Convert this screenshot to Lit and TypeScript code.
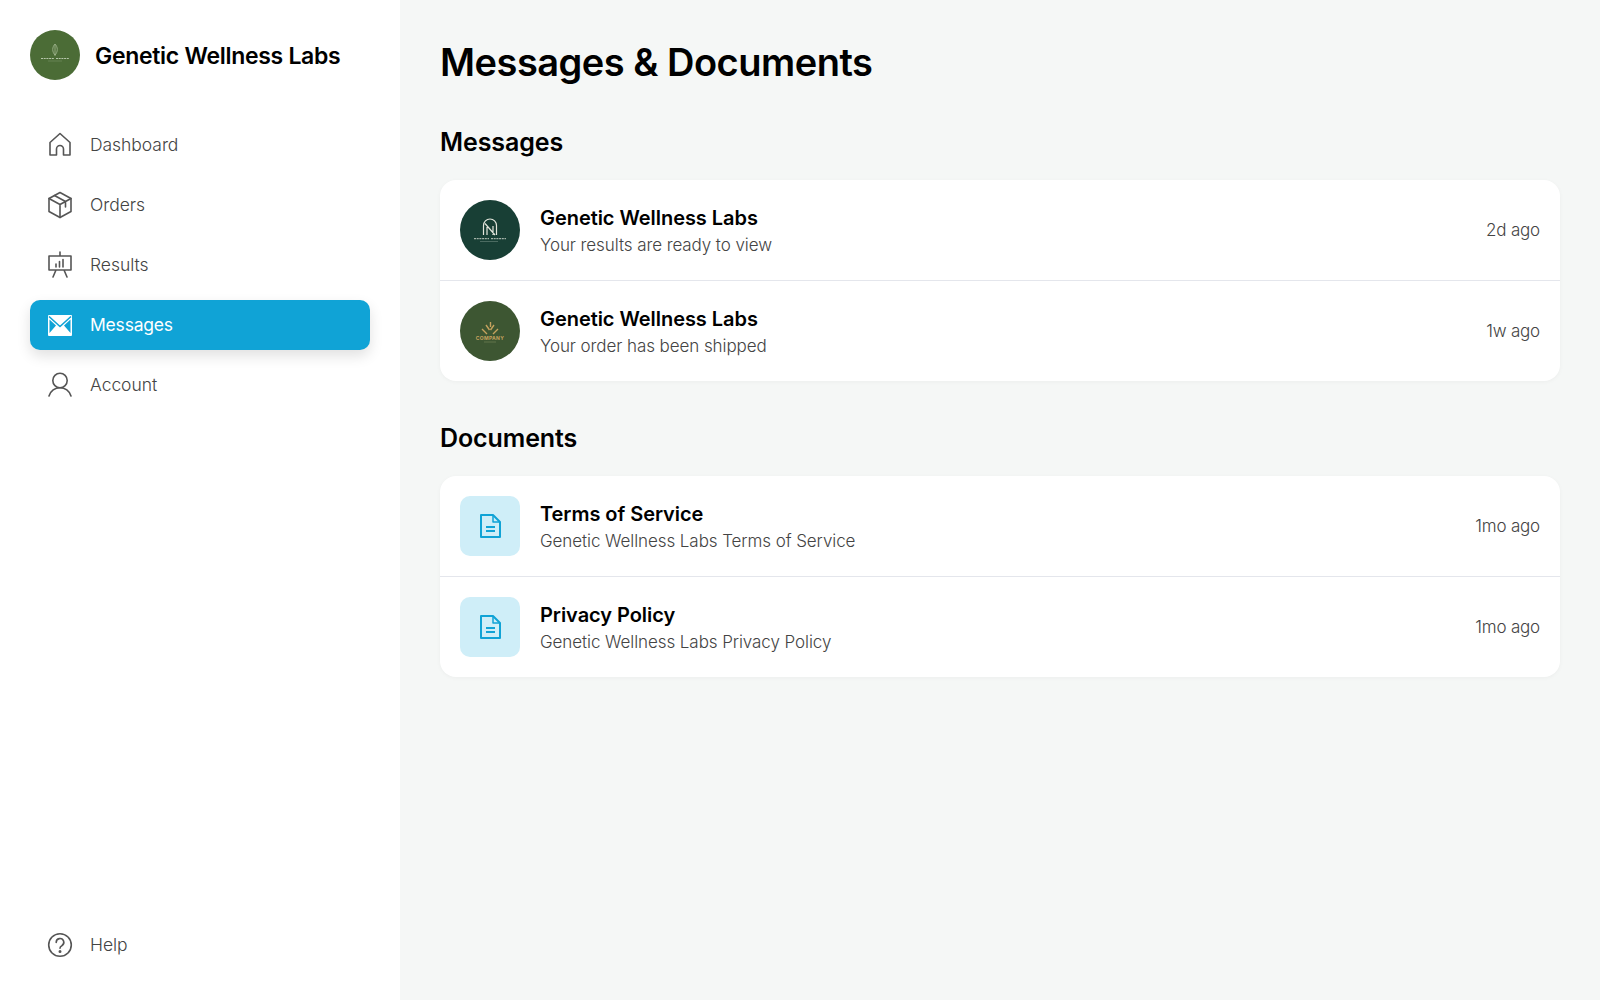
import { LitElement, css, html, svg } from 'lit'
import { customElement } from 'lit/decorators.js'

const navIcons: Record<string, unknown> = {
  Dashboard: svg`<path d="M2 22V9.5L12 0.5L22 9.5V22H15.5V16A3.5 3.5 0 0 0 8.5 16V22Z"/>`,
  Orders: svg`<path d="M12 -0.5L23 5.5V18.5L12 24.5L1 18.5V5.5Z"/><path d="M1 5.5L12 11.5L23 5.5M12 11.5V24.5M6.5 2.5L17.5 8.5V14"/>`,
  Results: svg`<path d="M12 -1V3M1 3H23V17H1ZM8 17L5 24M16 17L19 24M8 14V11M11.5 14V8.5M15 14V6.5"/>`,
  Account: svg`<circle cx="12" cy="7.5" r="7.2"/><path d="M1 23C2.5 18 7 14.7 12 14.7S21.5 18 23 23"/>`,
  Help: svg`<circle cx="12" cy="12" r="11.3"/><path d="M8.2 9.5A3.8 3.8 0 1 1 13.8 12.7C12.6 13.3 12 14 12 15.3"/><circle cx="12" cy="18.5" r="0.7"/>`,
}

const envelope = svg`<path fill="#fff" stroke="none" d="M1 2H23A1 1 0 0 1 24 3V22A1 1 0 0 1 23 23H1A1 1 0 0 1 0 22V3A1 1 0 0 1 1 2Z"/>
  <path fill="none" stroke="#10a3d6" stroke-width="1.6" stroke-linecap="butt" d="M1 3.5L12 13.5L23 3.5"/>
  <path fill="#10a3d6" stroke="none" d="M1.5 6.5L8 12.5L1.5 20ZM22.5 6.5L16 12.5L22.5 20Z"/>`

const docIcon = html`<svg width="24" height="26" viewBox="0 0 24 26" fill="none" stroke="#10a3d6" stroke-width="2" stroke-linejoin="round">
  <path d="M3 2H15L22 9V24H3Z"/><path d="M15 2V9H22" stroke-width="1.5"/><path d="M8 14H17M8 18H17" />
</svg>`

const logoOne = html`<svg width="60" height="60" viewBox="0 0 60 60">
  <circle cx="30" cy="30" r="30" fill="#183f35"/>
  <path d="M23.5 35V25.5A6.5 6.5 0 0 1 36.5 25.5V35M25 23.5L35 35M27 35V27M33 35V26" fill="none" stroke="#e4e6dc" stroke-width="1.2"/>
  <path d="M14 38.7H29M31 38.7H46" stroke="#c8d0c6" stroke-width="1" stroke-dasharray="2 0.7"/>
  <path d="M20 41.5H38" stroke="#6f8a80" stroke-width="0.6"/>
</svg>`

const logoTwo = html`<svg width="60" height="60" viewBox="0 0 60 60">
  <circle cx="30" cy="30" r="30" fill="#3d5632"/>
  <path d="M22 28L27 33M38 28L33 33M26 24L29.5 29M34 24L30.5 29M30.5 21V26" fill="none" stroke="#c5a25e" stroke-width="1.4"/>
  <text x="30" y="39" text-anchor="middle" font-size="5" font-weight="700" letter-spacing="0.3" fill="#c5a25e">COMPANY</text>
  <path d="M24 41H36" stroke="#7d8a5c" stroke-width="0.6"/>
</svg>`

const brandLogo = html`<svg width="50" height="50" viewBox="0 0 50 50">
  <circle cx="25" cy="25" r="25" fill="#4b6c36"/>
  <path d="M25 14C22 17 22 22 25 25C28 22 28 17 25 14ZM25 15V26" fill="none" stroke="#a7bb96" stroke-width="0.8"/>
  <path d="M11 28.5H24M26 28.5H39" stroke="#c3d0b8" stroke-width="0.9" stroke-dasharray="2 0.7"/>
  <path d="M18 31H32" stroke="#829a70" stroke-width="0.5"/>
</svg>`

const nav = ['Dashboard', 'Orders', 'Results', 'Messages', 'Account']

const messages = [
  { logo: logoOne, title: 'Genetic Wellness Labs', text: 'Your results are ready to view', time: '2d ago' },
  { logo: logoTwo, title: 'Genetic Wellness Labs', text: 'Your order has been shipped', time: '1w ago' },
]

const documents = [
  { title: 'Terms of Service', text: 'Genetic Wellness Labs Terms of Service', time: '1mo ago' },
  { title: 'Privacy Policy', text: 'Genetic Wellness Labs Privacy Policy', time: '1mo ago' },
]

@customElement('app-root')
export class AppRoot extends LitElement {
  static styles = css`
    :host {
      display: flex;
      height: 1000px;
      font-family: Inter, 'Noto Sans', sans-serif;
      color: #000;
      background: #f5f7f6;
    }

    .sidebar {
      width: 400px;
      box-sizing: border-box;
      background: #fff;
      padding: 30px;
      display: flex;
      flex-direction: column;
    }

    .brand {
      display: flex;
      align-items: center;
      gap: 15px;
      height: 50px;
      margin-bottom: 40px;
      font-size: 23px;
      font-weight: 600;
      letter-spacing: -0.3px;
    }

    .brand svg { display: block; }

    .brand span { margin-top: 2px; }

    .nav {
      display: flex;
      flex-direction: column;
      gap: 10px;
    }

    .item {
      display: flex;
      align-items: center;
      gap: 17px;
      height: 50px;
      padding-left: 17px;
      border-radius: 10px;
      font-size: 17.5px;
      font-weight: 300;
      letter-spacing: -0.05px;
      color: #444;
    }

    .item span { margin-bottom: 1px; }

    .item svg {
      width: 26px;
      height: 26px;
      flex: none;
      overflow: visible;
      fill: none;
      stroke: #555;
      stroke-width: 1.6;
      stroke-linejoin: round;
      stroke-linecap: round;
    }

    .item.active {
      background: #10a3d6;
      color: #fff;
      font-weight: 400;
      letter-spacing: -0.2px;
      box-shadow: 0 6px 14px rgba(0, 0, 0, 0.12);
    }

    .item.help { margin-top: auto; }

    .main {
      flex: 1;
      padding: 40px 40px 0;
    }

    h1 {
      margin: 0;
      font-size: 38px;
      line-height: 44px;
      font-weight: 600;
      letter-spacing: -0.5px;
    }

    h2 {
      margin: 42px 0 22px;
      font-size: 25px;
      line-height: 32px;
      font-weight: 600;
      letter-spacing: -0.1px;
    }

    .card + h2 { margin-top: 41px; }

    .card {
      background: #fff;
      border-radius: 16px;
      box-shadow: 0 1px 4px rgba(0, 0, 0, 0.04);
    }

    .row {
      display: flex;
      align-items: center;
      gap: 20px;
      height: 100px;
      padding: 0 20px;
    }

    .row + .row { border-top: 1px solid #e4e6ec; }

    .thumb {
      width: 60px;
      height: 60px;
      flex: none;
    }

    .thumb svg { display: block; }

    .doc {
      border-radius: 10px;
      background: #cfeef8;
      display: flex;
      align-items: center;
      justify-content: center;
    }

    .body {
      flex: 1;
      padding-top: 3px;
    }

    .title {
      font-size: 20px;
      line-height: 28px;
      font-weight: 600;
      letter-spacing: -0.05px;
    }

    .text {
      font-size: 17px;
      line-height: 27px;
      font-weight: 300;
      letter-spacing: -0.08px;
      color: #444;
    }

    .time {
      font-size: 17px;
      font-weight: 300;
      letter-spacing: -0.2px;
      color: #444;
    }
  `

  #navItem(name: string, extra = '') {
    return html`
      <div class="item ${extra}">
        <svg viewBox="-1 -1 26 26">${name === 'Messages' ? envelope : navIcons[name]}</svg>
        <span>${name}</span>
      </div>
    `
  }

  render() {
    return html`
      <aside class="sidebar">
        <div class="brand">${brandLogo}<span>Genetic Wellness Labs</span></div>
        <nav class="nav">
          ${nav.map((name) => this.#navItem(name, name === 'Messages' ? 'active' : ''))}
        </nav>
        ${this.#navItem('Help', 'help')}
      </aside>
      <main class="main">
        <h1>Messages &amp; Documents</h1>
        <h2>Messages</h2>
        <div class="card">
          ${messages.map((m) => html`
            <div class="row">
              <div class="thumb">${m.logo}</div>
              <div class="body">
                <div class="title">${m.title}</div>
                <div class="text">${m.text}</div>
              </div>
              <div class="time">${m.time}</div>
            </div>
          `)}
        </div>
        <h2>Documents</h2>
        <div class="card">
          ${documents.map((d) => html`
            <div class="row">
              <div class="thumb doc">${docIcon}</div>
              <div class="body">
                <div class="title">${d.title}</div>
                <div class="text">${d.text}</div>
              </div>
              <div class="time">${d.time}</div>
            </div>
          `)}
        </div>
      </main>
    `
  }
}

declare global {
  interface HTMLElementTagNameMap {
    'app-root': AppRoot
  }
}
